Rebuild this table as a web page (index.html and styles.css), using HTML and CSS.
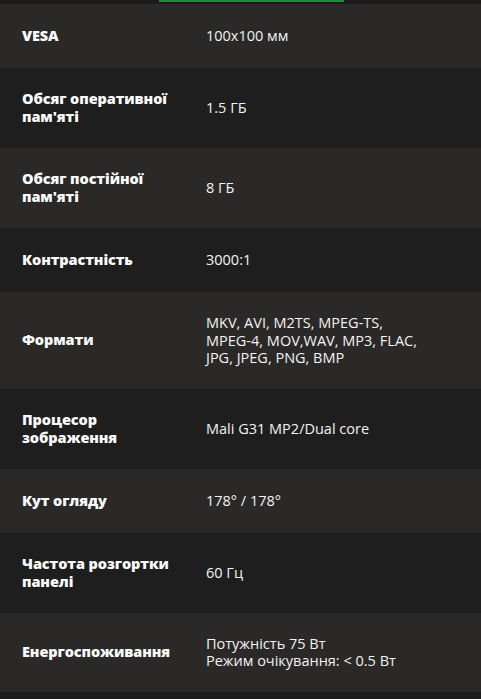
FILE: index.html
```html
<!DOCTYPE html>
<html lang="uk">
<head>
<meta charset="utf-8">
<link rel="stylesheet" href="styles.css">
</head>
<body>
<div class="topbar"><div class="tab-indicator"></div></div>
<div class="specs">
  <div class="row light"><div class="label">VESA</div><div class="value">100x100 мм</div></div>
  <div class="row dark"><div class="label">Обсяг оперативної пам'яті</div><div class="value">1.5 ГБ</div></div>
  <div class="row light"><div class="label">Обсяг постійної пам'яті</div><div class="value">8 ГБ</div></div>
  <div class="row dark"><div class="label">Контрастність</div><div class="value">3000:1</div></div>
  <div class="row light"><div class="label">Формати</div><div class="value">MKV, AVI, M2TS, <span class="nowrap">MPEG-TS,</span> <span class="nowrap">MPEG-4,</span> MOV,WAV, MP3, FLAC, JPG, JPEG, PNG, BMP</div></div>
  <div class="row dark"><div class="label">Процесор зображення</div><div class="value">Mali G31 MP2/Dual core</div></div>
  <div class="row light"><div class="label">Кут огляду</div><div class="value">178° / 178°</div></div>
  <div class="row dark"><div class="label">Частота розгортки панелі</div><div class="value">60 Гц</div></div>
  <div class="row light"><div class="label">Енергоспоживання</div><div class="value">Потужність 75 Вт<br>Режим очікування: &lt; 0.5 Вт</div></div>
</div>
</body>
</html>
```
FILE: styles.css
```css
html, body {
  margin: 0;
  padding: 0;
  background: #1d1c1c;
}
body {
  width: 481px;
  height: 699px;
  overflow: hidden;
  font-family: "Open Sans", "Noto Sans", sans-serif;
  color: #fbfbfb;
}
.topbar {
  height: 4px;
  background: #1c1b1b;
  position: relative;
}
.tab-indicator {
  position: absolute;
  left: 159px;
  width: 185px;
  top: 0;
  height: 2px;
  background: #1d8a3e;
}
.specs {
  display: flex;
  flex-direction: column;
}
.row {
  display: grid;
  grid-template-columns: 184px 1fr;
  align-items: center;
  padding: 22px 22px;
  min-height: 20px;
  font-size: 14.5px;
  line-height: 18px;
}
.row.light { background: #2a2928; }
.row.dark { background: #1f1e1e; }
.label {
  font-weight: 800;
  padding-right: 20px;
  letter-spacing: -0.1px;
}
.value {
  font-weight: 400;
  color: #f2f2f2;
  max-width: 232px;
  line-height: 17.5px;
}
.nowrap {
  white-space: nowrap;
}
```
